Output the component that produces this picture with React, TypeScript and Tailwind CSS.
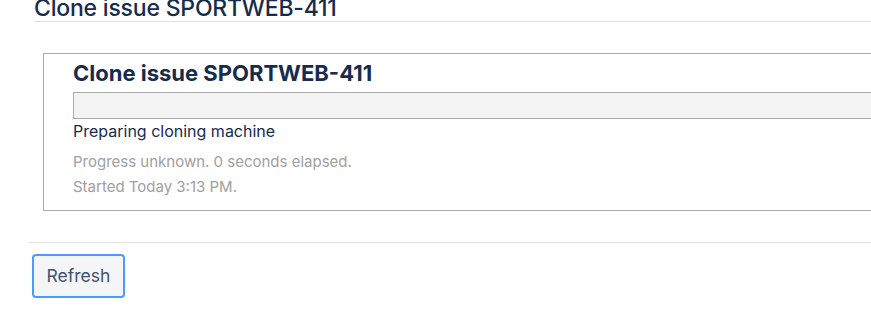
import React from "react";

export default function App() {
  return (
    <div
      className="w-[871px] h-[333px] overflow-hidden bg-white text-[#172b4d]"
      style={{ fontFamily: "Inter, 'Noto Sans', sans-serif" }}
    >
      <div className="w-[1100px] pl-[34px]">
        <h1 className="-mt-[4px] text-[23px] leading-[25px] font-medium tracking-[-0.2px] border-b border-[#dfdfdf]">
          Clone issue SPORTWEB-411
        </h1>
        <div className="ml-[9px] mt-[31px] border border-[#aaaaaa] pl-[29px] pt-[6px] pb-[11px]">
          <h2 className="text-[22px] leading-[26px] font-bold">
            Clone issue SPORTWEB-411
          </h2>
          <div className="mt-[6px] h-[27px] border border-[#aaaaaa] bg-[#f3f3f3]" />
          <div className="mt-[2px] text-[16px] leading-[20px] text-[#172b4d]">
            Preparing cloning machine
          </div>
          <div className="mt-[8px] text-[15px] leading-[25px] text-[#a0a0a0]">
            Progress unknown. 0 seconds elapsed.
          </div>
          <div className="text-[15px] leading-[25px] text-[#a0a0a0]">
            Started Today 3:13 PM.
          </div>
        </div>
        <div className="-ml-[6px] mt-[31px] border-t border-[#dfdfdf] pt-[11px] pl-[4px]">
          <button className="h-[44px] w-[93px] rounded-[4px] border-2 border-[#4c9aff] bg-[#f4f5f7] text-[17.5px] text-[#42526e]">
            Refresh
          </button>
        </div>
      </div>
    </div>
  );
}
